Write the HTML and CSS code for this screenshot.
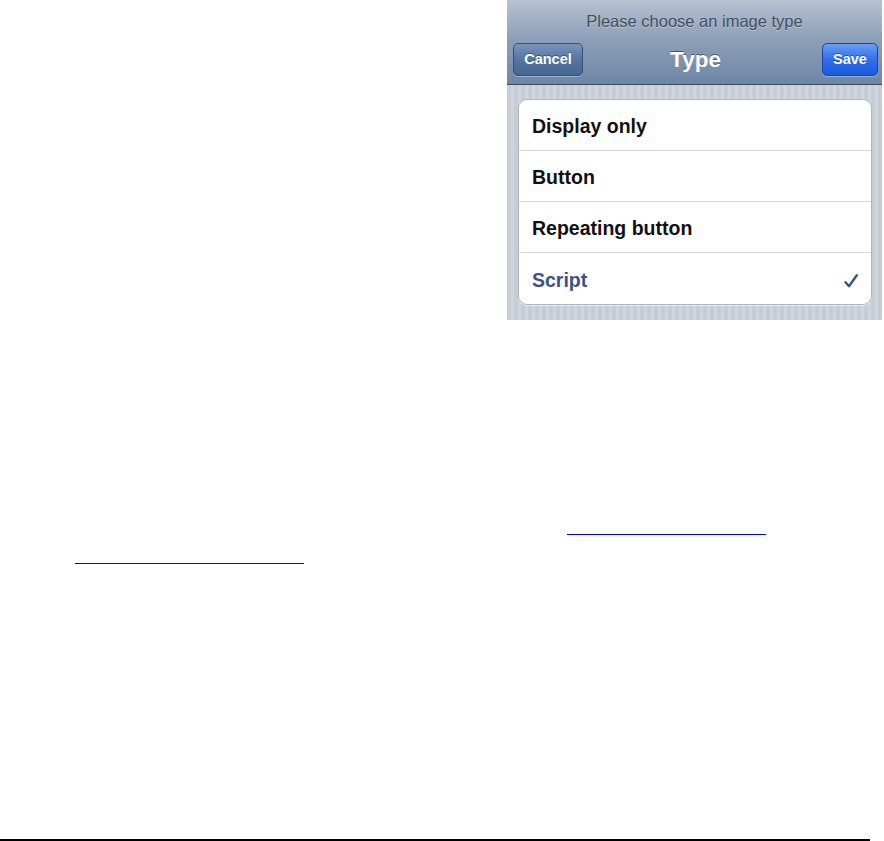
FILE: index.html
```html
<!DOCTYPE html>
<html lang="en">
<head>
    <meta charset="UTF-8">
    <title>Image type</title>
    <link rel="stylesheet" href="styles.css">
</head>
<body>
<div class="page">
    <div class="shot-row">
        <div class="phone">
            <div class="nav">
                <div class="prompt">Please choose an image type</div>
                <div class="bar">
                    <span class="nav-btn cancel">Cancel</span>
                    <span class="nav-title">Type</span>
                    <span class="nav-btn save">Save</span>
                </div>
            </div>
            <div class="grouped">
                <div class="card">
                    <div class="cell">Display only</div>
                    <div class="cell">Button</div>
                    <div class="cell">Repeating button</div>
                    <div class="cell selected">
                        Script
                        <svg class="check" width="16" height="16" viewBox="0 0 16 16">
                            <path d="M2.5 9.2 L6 13.2 L13.8 2.2" fill="none" stroke="#385487" stroke-width="2.4" stroke-linecap="round" stroke-linejoin="round"/>
                        </svg>
                    </div>
                </div>
            </div>
        </div>
    </div>
    <div class="refs">
        <div class="ref-line"><a class="ref ref-a" href="#"></a></div>
        <div class="ref-line"><a class="ref ref-b" href="#"></a></div>
    </div>
    <div class="rule"></div>
</div>
</body>
</html>
```

FILE: styles.css
```css
html, body {
    margin: 0;
    background: #fff;
}

.page {
    width: 884px;
    font-family: "Liberation Sans", Arial, sans-serif;
}

.shot-row {
    display: flex;
    justify-content: flex-end;
    padding-right: 2px;
}

.phone {
    width: 375px;
    height: 320px;
    display: flex;
    flex-direction: column;
}

.nav {
    height: 84px;
    background: linear-gradient(#b6c2d0, #8ea0b9 45%, #6e86a6);
    border-bottom: 1px solid #3e4a5a;
    display: flex;
    flex-direction: column;
}

.prompt {
    height: 42px;
    line-height: 42px;
    text-align: center;
    font-size: 16.5px;
    color: #434f60;
    text-shadow: 0 1px rgba(255, 255, 255, 0.35);
}

.bar {
    display: grid;
    grid-template-columns: 1fr auto 1fr;
    align-items: start;
    padding: 1px 4px 0 6px;
}

.nav-btn {
    height: 31px;
    line-height: 31px;
    border-radius: 5px;
    color: #fff;
    font-size: 14.5px;
    font-weight: bold;
    text-align: center;
    text-shadow: 0 -1px rgba(0, 0, 0, 0.35);
    box-shadow: 0 1px rgba(255, 255, 255, 0.3);
}

.cancel {
    width: 68px;
    background: linear-gradient(#7895bd, #56759f 50%, #466794);
    border: 1px solid #3a5275;
}

.save {
    justify-self: end;
    width: 54px;
    background: linear-gradient(#6a9ef5, #2f6fe8 50%, #1a5be0);
    border: 1px solid #1d44a0;
}

.nav-title {
    font-size: 22.5px;
    font-weight: bold;
    color: #fff;
    line-height: 31px;
    padding-top: 1px;
    text-shadow: 0 -1px rgba(0, 0, 0, 0.45);
}

.grouped {
    flex: 1;
    background: repeating-linear-gradient(90deg, #c6cdd5 0 4px, #d0d6dd 4px 7px);
    padding: 14px 10px 14px 11px;
}

.card {
    background: #fff;
    border: 1px solid #aeb5bf;
    border-radius: 9px;
    box-shadow: 0 1px rgba(255, 255, 255, 0.6);
}

.cell {
    height: 51px;
    box-sizing: border-box;
    display: flex;
    align-items: center;
    justify-content: space-between;
    padding: 3px 12px 0 13px;
    font-size: 19.5px;
    font-weight: bold;
    color: #111;
    border-bottom: 1px solid #d6d6d6;
}

.cell:last-child {
    border-bottom: none;
}

.selected {
    color: #385487;
}

.check {
    margin-top: 1px;
}

.refs {
    margin-top: 186px;
    padding-left: 75px;
}

.ref-line {
    height: 29px;
    display: flex;
    align-items: flex-end;
}

.ref {
    display: block;
    height: 0;
    border-bottom: 1px solid #0000ff;
}

.ref-a {
    margin-left: 492px;
    width: 199px;
}

.ref-b {
    width: 229px;
}

.rule {
    margin-top: 275px;
    width: 870px;
    height: 2px;
    background: #000;
}
```
